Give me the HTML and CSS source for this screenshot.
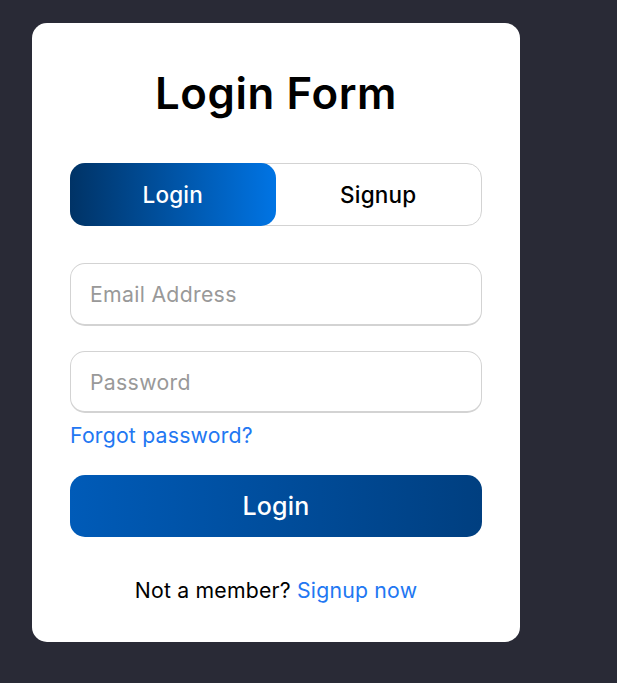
FILE: index.html
```html
<!DOCTYPE html>
<html lang="en">

<head>
  <meta charset="UTF-8" />
  <meta name="viewport" content="width=device-width, initial-scale=1.0" />
  <title>Login Form</title>
  <link rel="stylesheet" href="styles.css">
</head>

<body>
  <div class="wrapper">
    <h1 class="title">Login Form</h1>

    <div class="slide-controls">
      <span class="slide login active">Login</span>
      <span class="slide signup">Signup</span>
    </div>

    <form class="login-form" action="#">
      <div class="field">
        <input type="text" placeholder="Email Address" required />
      </div>
      <div class="field field-pass">
        <input type="password" placeholder="Password" required />
      </div>
      <div class="pass-link"><a href="#">Forgot password?</a></div>
      <button type="submit" class="btn">Login</button>
      <div class="signup-link">Not a member? <a href="#">Signup now</a></div>
    </form>
  </div>
</body>

</html>
```

FILE: styles.css
```css
* {
  margin: 0;
  padding: 0;
  box-sizing: border-box;
}

body {
  font-family: Inter, "Open Sans", sans-serif;
  background: #292a36;
  padding: 23px 0 0 32px;
  min-height: 100vh;
}

.wrapper {
  width: 488px;
  background: #fff;
  border-radius: 15px;
  padding: 41px 38px 39px;
}

.title {
  text-align: center;
  font-size: 43.75px;
  font-weight: 600;
  letter-spacing: 0.6px;
  line-height: 60px;
  color: #000;
}

/* login / signup toggle */
.slide-controls {
  display: flex;
  height: 63px;
  margin-top: 39px;
  border: 1px solid lightgrey;
  border-radius: 15px;
}

.slide {
  flex: 1;
  display: flex;
  align-items: center;
  justify-content: center;
  font-size: 22.5px;
  font-weight: 500;
  letter-spacing: 0.2px;
  color: #000;
}

.slide.active {
  margin: -1px 0 -1px -1px;
  color: #fff;
  border-radius: 15px;
  background: linear-gradient(to right, #003366, #0074e4);
}

.field {
  margin-top: 37px;
}

.field-pass {
  margin-top: 25px;
}

.field input {
  width: 100%;
  height: 63px;
  padding-left: 19px;
  font-family: inherit;
  font-size: 21.25px;
  letter-spacing: 0.3px;
  border: 1px solid lightgrey;
  border-bottom-width: 2px;
  border-radius: 15px;
  outline: none;
}

.field-pass input {
  height: 62px;
}

.field input::placeholder {
  color: #999;
}

.pass-link {
  margin-top: 9px;
  line-height: 26px;
  font-size: 21.25px;
  letter-spacing: 0.2px;
}

a {
  color: #2277f2;
  text-decoration: none;
}

.btn {
  display: block;
  width: 100%;
  height: 62px;
  margin-top: 27px;
  border: none;
  border-radius: 15px;
  font-family: inherit;
  font-size: 25px;
  font-weight: 500;
  letter-spacing: 0.2px;
  color: #fff;
  background: linear-gradient(to right, #005bb8, #003f80);
  cursor: pointer;
}

.signup-link {
  margin-top: 40px;
  text-align: center;
  line-height: 26px;
  font-size: 21.25px;
  letter-spacing: 0.2px;
  color: #000;
}
```
